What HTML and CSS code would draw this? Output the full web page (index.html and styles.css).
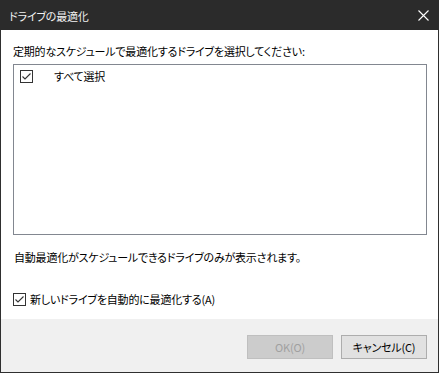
FILE: index.html
```html
<!DOCTYPE html>
<html lang="ja">
<head>
<meta charset="utf-8">
<link rel="stylesheet" href="styles.css">
</head>
<body>
<div class="window">
  <div class="titlebar">
    <span class="title">ドライブの最適化</span>
    <svg class="close" width="11" height="11" viewBox="0 0 11 11"><path d="M0.5 0.5L10.5 10.5M10.5 0.5L0.5 10.5" stroke="#ffffff" stroke-width="1.1" fill="none"/></svg>
  </div>
  <div class="content">
    <div class="label">定期的なスケジュールで最適化するドライブを選択してください:</div>
    <div class="listbox">
      <div class="item">
        <svg class="check" width="13" height="13" viewBox="0 0 13 13"><rect x="0.5" y="0.5" width="12" height="12" fill="#fff" stroke="#333" stroke-width="1"/><path d="M2.5 6.5L5 9L10.5 3.5" stroke="#333" stroke-width="1.1" fill="none"/></svg>
        <span class="item-text">すべて選択</span>
      </div>
    </div>
    <div class="note">自動最適化がスケジュールできるドライブのみが表示されます。</div>
    <div class="option">
      <svg class="check" width="13" height="13" viewBox="0 0 13 13"><rect x="0.5" y="0.5" width="12" height="12" fill="#fff" stroke="#333" stroke-width="1"/><path d="M2.5 6.5L5 9L10.5 3.5" stroke="#333" stroke-width="1.1" fill="none"/></svg>
      <span class="option-text">新しいドライブを自動的に最適化する(A)</span>
    </div>
  </div>
  <div class="footer">
    <button class="btn btn-disabled">OK(O)</button>
    <button class="btn">キャンセル(C)</button>
  </div>
</div>
</body>
</html>
```

FILE: styles.css
```css
* { box-sizing: border-box; }
html, body { margin: 0; padding: 0; background: #ffffff; }
body {
  font-family: "Noto Sans CJK JP", "Noto Sans", sans-serif;
  font-size: 11px;
  letter-spacing: -0.2px;
  font-feature-settings: "palt";
  color: #000;
}
.window {
  width: 439px;
  height: 373px;
  border: 1px solid #2f2f2f;
  border-top: none;
  display: flex;
  flex-direction: column;
}
.titlebar {
  height: 30px;
  background: #2b2b2b;
  margin: 0 -1px;
  display: flex;
  align-items: center;
  justify-content: space-between;
  padding: 0 9px 0 9px;
  color: #f2f2f2;
}
.title { font-size: 11px; line-height: 16px; margin-top: 1px; }
.close { margin-right: 1px; margin-top: 1px; }
.content {
  height: 289px;
  background: #ffffff;
  padding: 13px 11px 0 12px;
}
.label { line-height: 16px; height: 16px; }
.listbox {
  margin-top: 5px;
  height: 171px;
  border: 1px solid #828790;
  padding: 4px 6px;
}
.item { display: flex; align-items: center; height: 15px; }
.item-text { margin-left: 21px; line-height: 15px; }
.check { flex: none; display: block; }
.note { margin-top: 14px; line-height: 16px; height: 16px; padding-left: 1px; }
.option {
  margin-top: 26px;
  display: flex;
  align-items: center;
  height: 16px;
}
.option-text { margin-left: 4px; line-height: 16px; }
.footer {
  flex: 1;
  background: #f0f0f0;
  display: flex;
  justify-content: flex-end;
  align-items: flex-start;
  padding: 16px 11px 0 0;
  gap: 8px;
}
.btn {
  width: 86px;
  height: 24px;
  font-family: inherit;
  font-size: 11px;
  letter-spacing: -0.2px;
  font-feature-settings: "palt";
  background: #e1e1e1;
  border: 1px solid #adadad;
  color: #000;
  padding: 0;
  line-height: 20px;
}
.btn-disabled {
  background: #cccccc;
  border-color: #bfbfbf;
  color: #a0a0a0;
}
```
